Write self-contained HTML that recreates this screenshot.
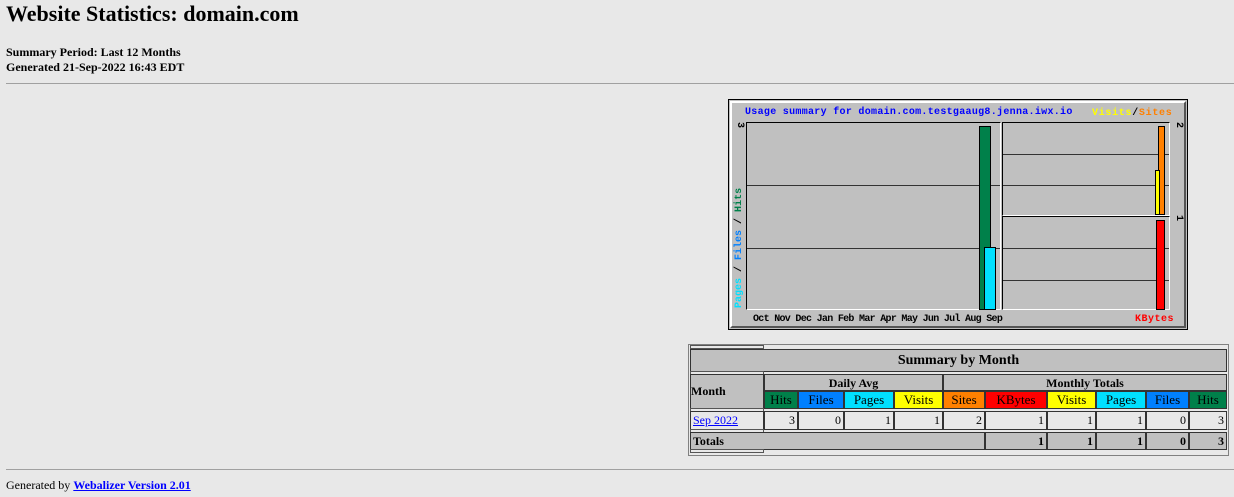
<!DOCTYPE html>
<html><head><meta charset="utf-8"><style>
body{margin:0;background:#e8e8e8;width:1234px;height:497px;position:relative;overflow:hidden;font-family:"Liberation Serif",serif;color:#000}
.a{position:absolute}
.c{position:absolute;box-sizing:border-box;border:1px solid #333;font-weight:bold;font-size:12px;text-align:center;line-height:16px;white-space:nowrap;overflow:hidden}
.n{text-align:right;font-weight:normal;background:#e8e8e8;padding-right:2px}
.g{background:#c0c0c0}
.h{font-weight:normal;font-size:13px}
.s{position:absolute;box-sizing:border-box;border:1px solid #555;height:4px;background:#e8e8e8}
.m{font-family:"Liberation Mono",monospace;font-weight:bold;font-size:10px;position:absolute;white-space:nowrap}
.hl{position:absolute;height:1px;background:#333}
</style></head><body>
<div class="a" style="left:6px;top:1px;font-size:22px;font-weight:bold">Website Statistics: domain.com</div>
<div class="a" style="left:6px;top:45px;font-size:12px;font-weight:bold;line-height:15px">Summary Period: Last 12 Months<br>Generated 21-Sep-2022 16:43 EDT</div>
<div class="a" style="left:6px;top:83px;width:1228px;height:1px;background:#a0a0a0"></div>

<div class="a" style="left:728px;top:99px;width:460px;height:231px;box-sizing:border-box;border:1px solid #000;background:#c0c0c0">
 <div class="a" style="left:1px;top:1px;right:1px;bottom:1px;border:2px solid;border-color:#fff #555 #555 #fff"></div>
</div>
<div class="m" style="left:745px;top:107px;color:#0000ff;letter-spacing:0.3px">Usage summary for domain.com.testgaaug8.jenna.iwx.io</div>
<div class="m" style="left:1092px;top:108px;color:#ff0;letter-spacing:0.7px">Visits<span style="color:#000">/</span><span style="color:#ff8000">Sites</span></div>
<div class="a" style="left:746px;top:122px;width:255px;height:188px;box-sizing:border-box;border:1px solid;border-color:#000 #fff #fff #000;background:#c0c0c0"></div>
<div class="a" style="left:1002px;top:122px;width:168px;height:94px;box-sizing:border-box;border:1px solid;border-color:#000 #fff #fff #000;background:#c0c0c0"></div>
<div class="a" style="left:1002px;top:216px;width:168px;height:94px;box-sizing:border-box;border:1px solid;border-color:#000 #fff #fff #000;background:#c0c0c0"></div>
<div class="hl" style="left:747px;top:185px;width:253px"></div>
<div class="hl" style="left:747px;top:248px;width:253px"></div>
<div class="hl" style="left:1003px;top:154px;width:166px"></div>
<div class="hl" style="left:1003px;top:185px;width:166px"></div>
<div class="hl" style="left:1003px;top:248px;width:166px"></div>
<div class="hl" style="left:1003px;top:280px;width:166px"></div>
<div class="a" style="left:979px;top:126px;width:12px;height:184px;box-sizing:border-box;border:1px solid #000;background:#00804a"></div>
<div class="a" style="left:984px;top:247px;width:12px;height:63px;box-sizing:border-box;border:1px solid #000;background:#00e0ff"></div>
<div class="a" style="left:1158px;top:126px;width:7px;height:89px;box-sizing:border-box;border:1px solid #000;background:#ff8000"></div>
<div class="a" style="left:1155px;top:170px;width:5px;height:45px;box-sizing:border-box;border:1px solid #000;background:#ff0"></div>
<div class="a" style="left:1156px;top:220px;width:9px;height:90px;box-sizing:border-box;border:1px solid #000;background:#f00"></div>
<div class="m" style="left:753px;top:314px;color:#000;letter-spacing:-0.7px">Oct Nov Dec Jan Feb Mar Apr May Jun Jul Aug Sep</div>
<div class="m" style="left:1135px;top:314px;color:#f00;letter-spacing:0.5px">KBytes</div>
<div class="m" style="left:734px;top:308px;transform:rotate(-90deg);transform-origin:0 0;color:#00e0ff">Pages<span style="color:#000"> / </span><span style="color:#0080ff">Files</span><span style="color:#000"> / </span><span style="color:#00804a">Hits</span></div>
<div class="m" style="transform:rotate(90deg);transform-origin:0 0;left:745px;top:122px">3</div>
<div class="m" style="left:1184px;top:122px;transform:rotate(90deg);transform-origin:0 0">2</div>
<div class="m" style="left:1184px;top:215px;transform:rotate(90deg);transform-origin:0 0">1</div>

<div class="a" style="left:688px;top:344px;width:541px;height:112px;box-sizing:border-box;border:1px solid #808080"></div>
<div class="s" style="left:690px;top:345px;width:74px"></div>
<div class="c g" style="left:690px;top:349px;width:537px;height:23px;font-size:14px;line-height:21px">Summary by Month</div>
<div class="s" style="left:690px;top:371px;width:74px"></div>
<div class="c g" style="left:690px;top:374px;width:74px;height:35px;text-align:left;line-height:33px">Month</div>
<div class="c g" style="left:764px;top:374px;width:179px;height:17px">Daily Avg</div>
<div class="c g" style="left:943px;top:374px;width:284px;height:17px">Monthly Totals</div>
<div class="c h" style="left:764px;top:391px;width:34px;height:18px;background:#00804a">Hits</div>
<div class="c h" style="left:798px;top:391px;width:46px;height:18px;background:#0080ff">Files</div>
<div class="c h" style="left:844px;top:391px;width:50px;height:18px;background:#00e0ff">Pages</div>
<div class="c h" style="left:894px;top:391px;width:49px;height:18px;background:#ff0">Visits</div>
<div class="c h" style="left:943px;top:391px;width:42px;height:18px;background:#ff8000">Sites</div>
<div class="c h" style="left:985px;top:391px;width:62px;height:18px;background:#f00">KBytes</div>
<div class="c h" style="left:1047px;top:391px;width:49px;height:18px;background:#ff0">Visits</div>
<div class="c h" style="left:1096px;top:391px;width:50px;height:18px;background:#00e0ff">Pages</div>
<div class="c h" style="left:1146px;top:391px;width:43px;height:18px;background:#0080ff">Files</div>
<div class="c h" style="left:1189px;top:391px;width:38px;height:18px;background:#00804a">Hits</div>
<div class="s" style="left:690px;top:408px;width:74px"></div>
<div class="c n" style="left:690px;top:411px;width:74px;height:19px;text-align:left;padding-left:2px"><span style="color:#00f;text-decoration:underline">Sep 2022</span></div>
<div class="c n" style="left:764px;top:411px;width:34px;height:19px">3</div>
<div class="c n" style="left:798px;top:411px;width:46px;height:19px">0</div>
<div class="c n" style="left:844px;top:411px;width:50px;height:19px">1</div>
<div class="c n" style="left:894px;top:411px;width:49px;height:19px">1</div>
<div class="c n" style="left:943px;top:411px;width:42px;height:19px">2</div>
<div class="c n" style="left:985px;top:411px;width:62px;height:19px">1</div>
<div class="c n" style="left:1047px;top:411px;width:49px;height:19px">1</div>
<div class="c n" style="left:1096px;top:411px;width:50px;height:19px">1</div>
<div class="c n" style="left:1146px;top:411px;width:43px;height:19px">0</div>
<div class="c n" style="left:1189px;top:411px;width:38px;height:19px">3</div>
<div class="s" style="left:690px;top:429px;width:74px"></div>
<div class="c g" style="left:690px;top:432px;width:295px;height:18px;text-align:left;padding-left:2px">Totals</div>
<div class="c g" style="left:985px;top:432px;width:62px;height:18px;text-align:right;padding-right:2px">1</div>
<div class="c g" style="left:1047px;top:432px;width:49px;height:18px;text-align:right;padding-right:2px">1</div>
<div class="c g" style="left:1096px;top:432px;width:50px;height:18px;text-align:right;padding-right:2px">1</div>
<div class="c g" style="left:1146px;top:432px;width:43px;height:18px;text-align:right;padding-right:2px">0</div>
<div class="c g" style="left:1189px;top:432px;width:38px;height:18px;text-align:right;padding-right:2px">3</div>
<div class="s" style="left:690px;top:449px;width:74px"></div>

<div class="a" style="left:6px;top:469px;width:1228px;height:1px;background:#a0a0a0"></div>
<div class="a" style="left:6px;top:478px;font-size:12px">Generated by <b style="color:#00f;text-decoration:underline">Webalizer Version 2.01</b></div>
</body></html>
